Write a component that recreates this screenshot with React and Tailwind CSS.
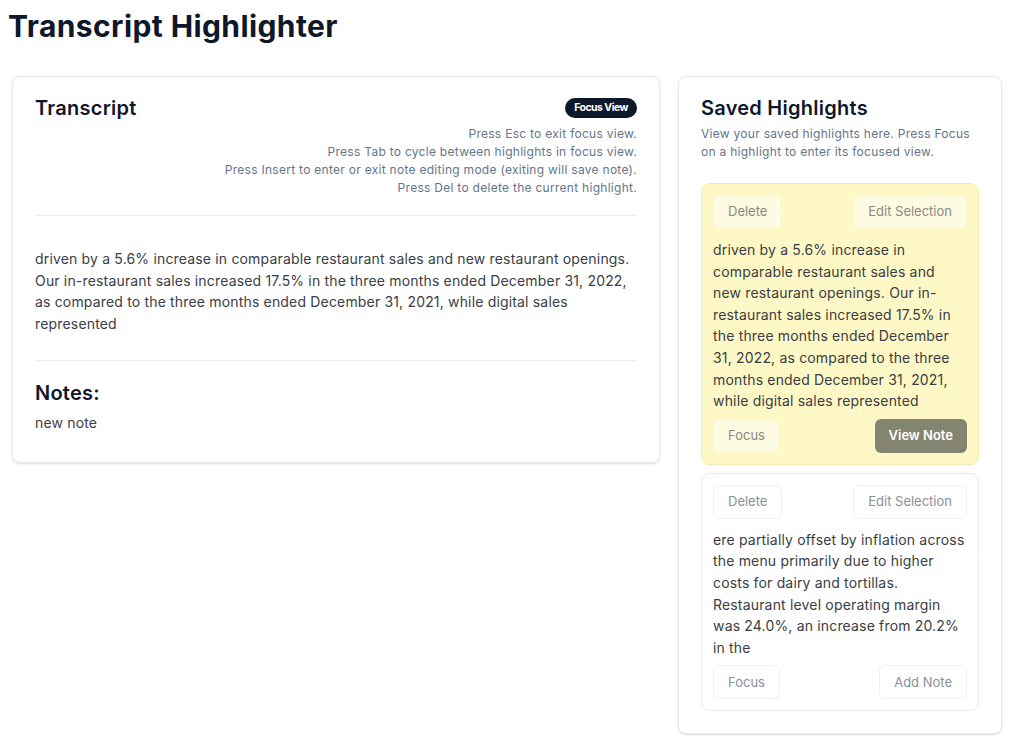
import React from "react";

const TRANSCRIPT =
  "driven by a 5.6% increase in comparable restaurant sales and new restaurant openings. Our in-restaurant sales increased 17.5% in the three months ended December 31, 2022, as compared to the three months ended December 31, 2021, while digital sales represented";

const HIGHLIGHTS = [
  {
    id: 1,
    text: TRANSCRIPT,
    hasNote: true,
    active: true,
  },
  {
    id: 2,
    text: "ere partially offset by inflation across the menu primarily due to higher costs for dairy and tortillas. Restaurant level operating margin was 24.0%, an increase from 20.2% in the",
    hasNote: false,
    active: false,
  },
];

function HighlightCard({ item }) {
  const btn = item.active
    ? "h-[34px] px-[14px] rounded-md border border-[#fbf3c6] bg-[#fefbe3] text-[13px] text-[#8a8a80]"
    : "h-[34px] px-[14px] rounded-md border border-[#eef0f3] bg-white text-[13px] text-[#8b8f97]";

  return (
    <div
      className={
        item.active
          ? "rounded-lg border border-[#f3ebb4] bg-[#fef8c6] p-[11px]"
          : "rounded-lg border border-[#e8ebef] bg-white p-[11px]"
      }
    >
      <div className="flex justify-between">
        <button className={btn}>Delete</button>
        <button className={btn}>Edit Selection</button>
      </div>
      <p className="mt-[10px] text-[14px] leading-[21.6px] tracking-[0.17px] text-[#3a3d44]">
        {item.text}
      </p>
      <div className="mt-[7px] flex justify-between">
        <button className={btn}>Focus</button>
        {item.hasNote ? (
          <button className="h-[34px] px-[14px] rounded-md bg-[#848571] text-[13px] font-semibold text-white">
            View Note
          </button>
        ) : (
          <button className={btn}>Add Note</button>
        )}
      </div>
    </div>
  );
}

export default function App() {
  return (
    <div
      className="min-h-screen bg-white p-2 text-[#0f172a]"
      style={{ fontFamily: "Inter, 'Noto Sans', sans-serif" }}
    >
      <h1 className="text-[30px] leading-[36px] font-bold tracking-[0.4px]">
        Transcript Highlighter
      </h1>

      <div className="mt-8 ml-1 flex items-start gap-[18px]">
        <div className="flex-1 rounded-lg border border-[#e6e9ee] bg-white px-[22px] pt-[17px] pb-[29px] shadow-sm">
          <div className="flex h-[28px] items-center justify-between">
            <h2 className="text-[20px] leading-[28px] font-semibold tracking-[0.25px]">
              Transcript
            </h2>
            <span className="rounded-full bg-[#0f172a] px-[9px] py-[3px] text-[10.5px] leading-[14px] font-bold tracking-tighter text-white">
              Focus View
            </span>
          </div>
          <div className="mt-[3px] text-right text-[12px] leading-[18px] tracking-[0.28px] text-[#64748b]">
            <p>Press Esc to exit focus view.</p>
            <p>Press Tab to cycle between highlights in focus view.</p>
            <p>Press Insert to enter or exit note editing mode (exiting will save note).</p>
            <p>Press Del to delete the current highlight.</p>
          </div>
          <div className="mt-[18px] border-t border-[#e8ecf2]" />
          <p className="mt-[32px] text-[14px] leading-[21.6px] tracking-[0.17px] text-[#3a3d44]">
            {TRANSCRIPT}
          </p>
          <div className="mt-[26px] border-t border-[#e8ecf2]" />
          <h2 className="mt-[18px] text-[20px] leading-[28px] font-semibold tracking-[0.25px]">
            Notes:
          </h2>
          <p className="mt-[6px] text-[14px] leading-[20px] tracking-[0.17px] text-[#3a3d44]">
            new note
          </p>
        </div>

        <div className="w-[324px] rounded-lg border border-[#e6e9ee] bg-white px-[22px] pt-[17px] pb-[22px] shadow-sm">
          <h2 className="text-[20px] leading-[28px] font-semibold tracking-[0.25px]">
            Saved Highlights
          </h2>
          <p className="mt-[3px] text-[12px] leading-[18px] tracking-[0.28px] text-[#64748b]">
            View your saved highlights here. Press Focus on a highlight to enter its focused view.
          </p>
          <div className="mt-[22px] flex flex-col gap-2">
            {HIGHLIGHTS.map((h) => (
              <HighlightCard key={h.id} item={h} />
            ))}
          </div>
        </div>
      </div>
    </div>
  );
}
